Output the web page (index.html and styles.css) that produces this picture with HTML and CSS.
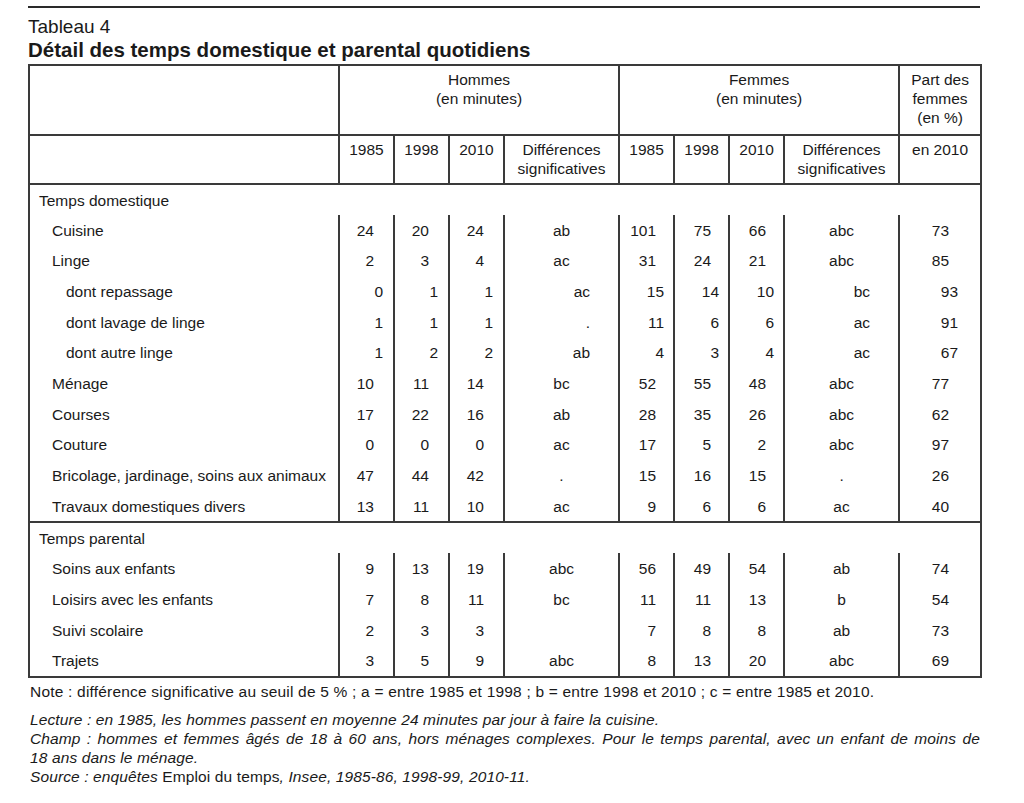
FILE: index.html
```html
<!DOCTYPE html>
<html lang="fr">
<head>
<meta charset="utf-8">
<title>Tableau 4</title>
<link rel="stylesheet" href="styles.css">
</head>
<body>
<div class="page">
  <div class="rule"></div>
  <div class="kicker">Tableau 4</div>
  <h1 class="title">Détail des temps domestique et parental quotidiens</h1>
  <table class="tbl">
    <colgroup>
      <col class="c-label"><col class="c-num"><col class="c-num"><col class="c-num"><col class="c-diff">
      <col class="c-num"><col class="c-num"><col class="c-num"><col class="c-diff"><col class="c-part">
    </colgroup>
    <thead>
      <tr class="h1">
        <th></th>
        <th colspan="4">Hommes<br>(en minutes)</th>
        <th colspan="4">Femmes<br>(en minutes)</th>
        <th>Part des<br>femmes<br>(en %)</th>
      </tr>
      <tr class="h2">
        <th></th>
        <th>1985</th><th>1998</th><th>2010</th><th>Différences<br>significatives</th>
        <th>1985</th><th>1998</th><th>2010</th><th>Différences<br>significatives</th>
        <th>en 2010</th>
      </tr>
    </thead>
    <tbody>
      <tr class="sec first"><td colspan="10">Temps domestique</td></tr>
      <tr class="row"><td class="lab">Cuisine</td><td class="m">24</td><td class="m">20</td><td class="m">24</td><td class="d">ab</td><td class="f">101</td><td class="f">75</td><td class="f">66</td><td class="d">abc</td><td class="p">73</td></tr>
      <tr class="row"><td class="lab">Linge</td><td class="m">2</td><td class="m">3</td><td class="m">4</td><td class="d">ac</td><td class="f">31</td><td class="f">24</td><td class="f">21</td><td class="d">abc</td><td class="p">85</td></tr>
      <tr class="row sub"><td class="lab">dont repassage</td><td class="m">0</td><td class="m">1</td><td class="m">1</td><td class="d">ac</td><td class="f">15</td><td class="f">14</td><td class="f">10</td><td class="d">bc</td><td class="p">93</td></tr>
      <tr class="row sub"><td class="lab">dont lavage de linge</td><td class="m">1</td><td class="m">1</td><td class="m">1</td><td class="d">.</td><td class="f">11</td><td class="f">6</td><td class="f">6</td><td class="d">ac</td><td class="p">91</td></tr>
      <tr class="row sub"><td class="lab">dont autre linge</td><td class="m">1</td><td class="m">2</td><td class="m">2</td><td class="d">ab</td><td class="f">4</td><td class="f">3</td><td class="f">4</td><td class="d">ac</td><td class="p">67</td></tr>
      <tr class="row"><td class="lab">Ménage</td><td class="m">10</td><td class="m">11</td><td class="m">14</td><td class="d">bc</td><td class="f">52</td><td class="f">55</td><td class="f">48</td><td class="d">abc</td><td class="p">77</td></tr>
      <tr class="row"><td class="lab">Courses</td><td class="m">17</td><td class="m">22</td><td class="m">16</td><td class="d">ab</td><td class="f">28</td><td class="f">35</td><td class="f">26</td><td class="d">abc</td><td class="p">62</td></tr>
      <tr class="row"><td class="lab">Couture</td><td class="m">0</td><td class="m">0</td><td class="m">0</td><td class="d">ac</td><td class="f">17</td><td class="f">5</td><td class="f">2</td><td class="d">abc</td><td class="p">97</td></tr>
      <tr class="row"><td class="lab">Bricolage, jardinage, soins aux animaux</td><td class="m">47</td><td class="m">44</td><td class="m">42</td><td class="d">.</td><td class="f">15</td><td class="f">16</td><td class="f">15</td><td class="d">.</td><td class="p">26</td></tr>
      <tr class="row"><td class="lab">Travaux domestiques divers</td><td class="m">13</td><td class="m">11</td><td class="m">10</td><td class="d">ac</td><td class="f">9</td><td class="f">6</td><td class="f">6</td><td class="d">ac</td><td class="p">40</td></tr>
      <tr class="sec"><td colspan="10">Temps parental</td></tr>
      <tr class="row"><td class="lab">Soins aux enfants</td><td class="m">9</td><td class="m">13</td><td class="m">19</td><td class="d">abc</td><td class="f">56</td><td class="f">49</td><td class="f">54</td><td class="d">ab</td><td class="p">74</td></tr>
      <tr class="row"><td class="lab">Loisirs avec les enfants</td><td class="m">7</td><td class="m">8</td><td class="m">11</td><td class="d">bc</td><td class="f">11</td><td class="f">11</td><td class="f">13</td><td class="d">b</td><td class="p">54</td></tr>
      <tr class="row"><td class="lab">Suivi scolaire</td><td class="m">2</td><td class="m">3</td><td class="m">3</td><td class="d"></td><td class="f">7</td><td class="f">8</td><td class="f">8</td><td class="d">ab</td><td class="p">73</td></tr>
      <tr class="row last"><td class="lab">Trajets</td><td class="m">3</td><td class="m">5</td><td class="m">9</td><td class="d">abc</td><td class="f">8</td><td class="f">13</td><td class="f">20</td><td class="d">abc</td><td class="p">69</td></tr>
    </tbody>
  </table>
  <p class="note">Note : différence significative au seuil de 5 % ; a = entre 1985 et 1998 ; b = entre 1998 et 2010 ; c = entre 1985 et 2010.</p>
  <div class="sources">
    <p><i>Lecture : en 1985, les hommes passent en moyenne 24 minutes par jour à faire la cuisine.</i></p>
    <p class="just"><i>Champ : hommes et femmes âgés de 18 à 60 ans, hors ménages complexes. Pour le temps parental, avec un enfant de moins de</i></p>
    <p><i>18 ans dans le ménage.</i></p>
    <p><i>Source : enquêtes </i>Emploi du temps<i>, Insee, 1985-86, 1998-99, 2010-11.</i></p>
  </div>
</div>
</body>
</html>
```

FILE: styles.css
```css
html, body {
  margin: 0;
  padding: 0;
  background: #ffffff;
}

body {
  font-family: "Liberation Sans", Arial, sans-serif;
  color: #1a1a1a;
}

.page {
  width: 952px;
  padding: 6px 0 0 28px;
}

.rule {
  height: 2px;
  background: #2a2a2a;
}

.kicker {
  margin-top: 8px;
  font-size: 19px;
  line-height: 22px;
}

.title {
  margin: 0;
  font-size: 20.5px;
  line-height: 24px;
  font-weight: bold;
}

.tbl {
  margin-top: 2px;
  width: 952px;
  table-layout: fixed;
  border-collapse: collapse;
  font-size: 15.5px;
  border: 2px solid #3a3a3a;
}

.c-label { width: 310px; }
.c-num { width: 55px; }
.c-diff { width: 115px; }
.c-part { width: 82px; }

.tbl th {
  font-weight: normal;
  text-align: center;
  vertical-align: top;
  line-height: 19px;
  padding: 4px 0 0 0;
  border: 2px solid #3a3a3a;
}

.h1 th { height: 64px; }
.h2 th { height: 43px; }

.tbl td {
  padding: 0;
  vertical-align: middle;
  line-height: 19px;
  white-space: nowrap;
}

.sec td {
  height: 30px;
  padding-left: 9px;
  border-top: 2px solid #3a3a3a;
}

.row td {
  height: 30.65px;
  border-left: 2px solid #3a3a3a;
}

.row td.lab {
  padding-left: 22px;
  border-left: none;
}

.row.sub td.lab { padding-left: 36px; }

.row td.m { text-align: right; padding-right: 19px; }
.row td.f { text-align: right; padding-right: 17px; }
.row td.d { text-align: center; }
.row td.p { text-align: right; padding-right: 31px; }

.row.sub td.m { padding-right: 10px; }
.row.sub td.f { padding-right: 9px; }
.row.sub td.d { text-align: right; padding-right: 28px; }
.row.sub td.p { padding-right: 22px; }

.note {
  margin: 4px 0 0 2px;
  font-size: 15.5px;
  letter-spacing: 0.2px;
  line-height: 19px;
}

.sources {
  margin-top: 9px;
  padding-left: 2px;
  font-size: 15.5px;
  letter-spacing: 0.12px;
  line-height: 19px;
}

.sources p { margin: 0; }

.sources .just {
  text-align: justify;
  text-align-last: justify;
}
```
